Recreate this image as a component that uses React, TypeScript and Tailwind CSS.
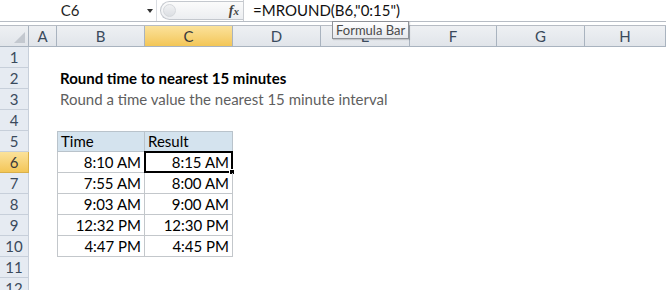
const cols = ["A", "B", "C", "D", "E", "F", "G", "H"];

const data = [
  ["8:10 AM", "8:15 AM"],
  ["7:55 AM", "8:00 AM"],
  ["9:03 AM", "9:00 AM"],
  ["12:32 PM", "12:30 PM"],
  ["4:47 PM", "4:45 PM"],
];

function FormulaBar() {
  return (
    <div className="flex h-[22px] items-stretch border-b border-[#b7bcc4] bg-white">
      {/* Name box */}
      <div className="relative flex w-[157px] items-center border-r border-[#dadde2]">
        <span className="w-[140px] text-center text-[15px] text-[#1f1f1f]">C6</span>
        <span className="absolute left-[147px] top-[9px] h-0 w-0 border-x-[3px] border-t-[4px] border-x-transparent border-t-[#333]" />
      </div>
      {/* grip + fx */}
      <div className="flex w-[86px] items-center py-[1px] pl-[3px]">
        <div className="flex h-[19px] flex-1 items-center rounded-l-full border border-r-0 border-[#c4c8ce] bg-gradient-to-b from-[#fbfbfb] to-[#eceef1]">
          <div className="ml-[2px] h-[13px] w-[13px] rounded-full border border-[#d5d8dc] bg-gradient-to-b from-[#f0f1f3] to-[#dcdfe3]" />
          <span className="ml-auto mr-[4px] font-['Liberation_Serif',serif] text-[14px] italic font-bold text-[#444]">
            f<span className="text-[11px]">x</span>
          </span>
        </div>
      </div>
      <div className="flex flex-1 items-center border-l border-[#c9ccd1] pl-[9px] text-[15px] text-[#111]">
        =MROUND(B6,"0:15")
      </div>
    </div>
  );
}

function ColHeader({ label }: { label: string }) {
  const active = label === "C";
  return (
    <div
      className={
        "flex items-center justify-center border-b border-r border-[#a9b3bf] text-[15px] " +
        (active
          ? "bg-gradient-to-b from-[#fbe29a] to-[#f3c656] text-[#3a3a3a]"
          : "bg-gradient-to-b from-[#eef0f3] to-[#e1e5ea] text-[#3a4a5c]")
      }
    >
      {label}
    </div>
  );
}

function RowHeader({ n }: { n: number }) {
  const active = n === 6;
  return (
    <div
      className={
        "flex items-center justify-center border-b border-r text-[15px] " +
        (active
          ? "border-[#d9b04a] bg-gradient-to-b from-[#fbe29a] to-[#f3c656] text-[#3a3a3a]"
          : "border-[#c7cfda] bg-[#e6ebf2] text-[#3a4a5c]")
      }
    >
      {n}
    </div>
  );
}

function Cell({ row, col }: { row: number; col: number }) {
  // col: 0=A,1=B,2=C...
  if (row === 2 && col === 1) {
    return (
      <div className="relative flex items-center pl-[3px]">
        <span className="whitespace-nowrap text-[15px] font-bold text-black">
          Round time to nearest 15 minutes
        </span>
      </div>
    );
  }
  if (row === 3 && col === 1) {
    return (
      <div className="relative flex items-center pl-[3px]">
        <span className="whitespace-nowrap text-[15px] text-[#5f5f5f]">
          Round a time value the nearest 15 minute interval
        </span>
      </div>
    );
  }
  if (row === 5 && (col === 1 || col === 2)) {
    return (
      <div
        className={
          "flex items-center border-y border-r border-[#b9c3cb] bg-[#d4e3ee] pl-[3px] text-[15px] text-black " +
          (col === 1 ? "border-l" : "")
        }
      >
        {col === 1 ? "Time" : "Result"}
      </div>
    );
  }
  if (row >= 6 && row <= 10 && (col === 1 || col === 2)) {
    const val = data[row - 6][col - 1];
    const selected = row === 6 && col === 2;
    return (
      <div
        className={
          "relative flex items-center justify-end border-b border-r border-[#c3c7cb] pr-[3px] text-[15px] text-black " +
          (col === 1 ? "border-l" : "")
        }
      >
        {selected && (
          <>
            <div className="absolute -left-[1px] -top-[1px] bottom-[-1px] right-[-1px] border-2 border-black" />
            <div className="absolute -bottom-[3px] -right-[3px] h-[6px] w-[6px] border border-white bg-black" />
          </>
        )}
        {val}
      </div>
    );
  }
  return <div />;
}

export default function App() {
  const rows = Array.from({ length: 12 }, (_, i) => i + 1);
  return (
    <div className="relative h-[290px] w-[666px] overflow-hidden bg-white [font-family:Lato,'Noto_Sans',sans-serif]">
      <FormulaBar />
      <div className="h-[3px] bg-white" />
      <div className="grid grid-cols-[29px_28px_88px_88px_88px_89px_87px_88px_81px] grid-rows-[21px_repeat(12,21px)] border-t border-[#b7bcc4]">
        {/* corner */}
        <div className="relative border-b border-r border-[#a9b3bf] bg-gradient-to-b from-[#eef0f3] to-[#e1e5ea]">
          <div className="absolute bottom-[3px] right-[3px] h-0 w-0 border-b-[11px] border-l-[11px] border-b-[#c3c8cf] border-l-transparent" />
        </div>
        {cols.map((c) => (
          <ColHeader key={c} label={c} />
        ))}
        {rows.map((r) => (
          <div key={r} className="contents">
            <RowHeader n={r} />
            {cols.map((c, ci) => (
              <Cell key={c} row={r} col={ci} />
            ))}
          </div>
        ))}
      </div>
      {/* tooltip */}
      <div className="absolute left-[332px] top-[21px] border border-[#8f9298] bg-gradient-to-b from-white to-[#e6e8ec] px-[3px] text-[13px] leading-[16px] text-[#4a4a4a] shadow-[1px_1px_1px_rgba(0,0,0,0.15)]">
        Formula Bar
      </div>
    </div>
  );
}
